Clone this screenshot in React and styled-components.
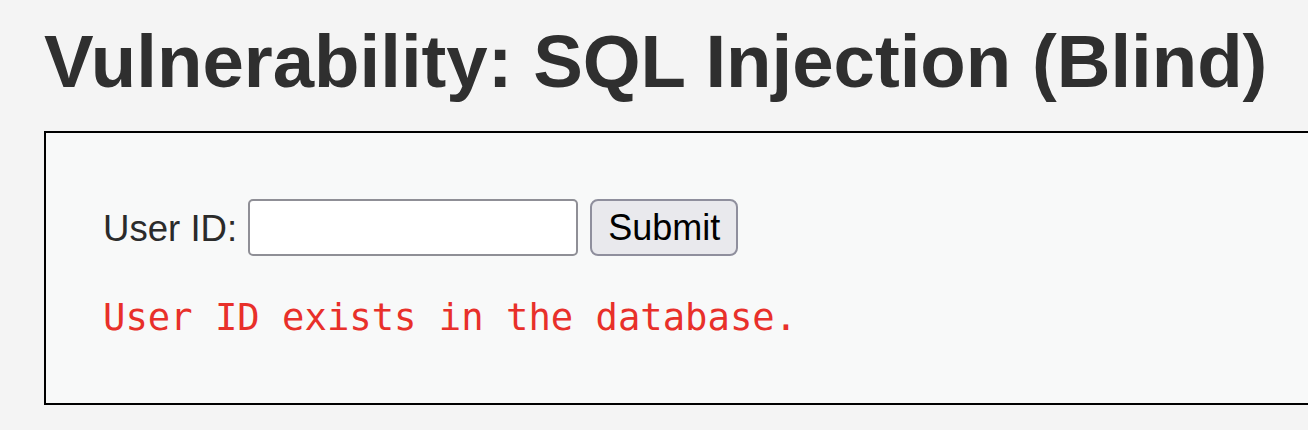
import React from 'react'
import styled, { createGlobalStyle } from 'styled-components'

const Global = createGlobalStyle`
  html, body {
    margin: 0;
    background: #f4f4f4;
    overflow: hidden;
  }
  body {
    font-family: "Liberation Sans", Arial, sans-serif;
  }
`

const Page = styled.main`
  padding: 19px 0 0 44px;
  overflow: hidden;
`

const Title = styled.h1`
  margin: 0;
  font-size: 74.4px;
  line-height: 85px;
  font-weight: 700;
  color: #2f2f2f;
  white-space: nowrap;
`

const Panel = styled.section`
  margin: 27px -6px 0 0;
  background: #f8f9f9;
  border: 2px solid #000;
  padding: 66px 0 64px 57px;
`

const Row = styled.form`
  display: flex;
  align-items: center;
  height: 57px;
`

const Label = styled.label`
  font-size: 36.6px;
  color: #2b2b2b;
  margin-right: 11px;
  padding-top: 2px;
`

const Input = styled.input`
  box-sizing: border-box;
  width: 330px;
  height: 57px;
  border: 2px solid #8f8f96;
  border-radius: 5px;
  background: #fff;
  margin-right: 12px;
`

const Button = styled.button`
  box-sizing: border-box;
  height: 57px;
  padding: 0 16px;
  font-family: "Liberation Sans", Arial, sans-serif;
  font-size: 36px;
  color: #000;
  background: #e9e9ed;
  border: 2px solid #8f8f9d;
  border-radius: 8px;
`

const Message = styled.pre`
  margin: 40px 0 0;
  font-family: "DejaVu Sans Mono", "Liberation Mono", monospace;
  font-size: 37.2px;
  line-height: 43px;
  color: #e8302a;
`

export default function App () {
  return (
    <>
      <Global />
      <Page>
        <Title>Vulnerability: SQL Injection (Blind)</Title>
        <Panel>
          <Row onSubmit={e => e.preventDefault()}>
            <Label>User ID:</Label>
            <Input type='text' />
            <Button type='submit'>Submit</Button>
          </Row>
          <Message>User ID exists in the database.</Message>
        </Panel>
      </Page>
    </>
  )
}
